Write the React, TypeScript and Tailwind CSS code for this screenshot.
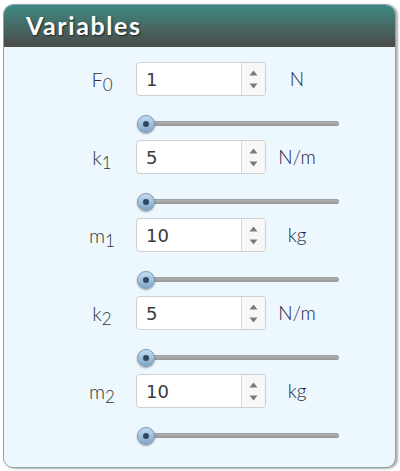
import React, { useState } from 'react';

interface Variable {
  id: string;
  sym: string;
  sub: string;
  value: string;
  unit: string;
}

const VARS: Variable[] = [
  { id: 'F0', sym: 'F', sub: '0', value: '1', unit: 'N' },
  { id: 'k1', sym: 'k', sub: '1', value: '5', unit: 'N/m' },
  { id: 'm1', sym: 'm', sub: '1', value: '10', unit: 'kg' },
  { id: 'k2', sym: 'k', sub: '2', value: '5', unit: 'N/m' },
  { id: 'm2', sym: 'm', sub: '2', value: '10', unit: 'kg' },
];

const Spinner = () => (
  <div className="flex flex-col w-[24px] border-l border-[#d6d6d6] bg-[#f7f7f7] rounded-r-[4px]">
    <div className="flex-1 flex items-center justify-center pt-[3px]">
      <svg width="9" height="6" viewBox="0 0 9 6"><path d="M4.5 0.5 L8.5 5.5 L0.5 5.5 Z" fill="#7a7a7a" /></svg>
    </div>
    <div className="flex-1 flex items-center justify-center pb-[3px]">
      <svg width="9" height="6" viewBox="0 0 9 6"><path d="M0.5 0.5 L8.5 0.5 L4.5 5.5 Z" fill="#7a7a7a" /></svg>
    </div>
  </div>
);

const Slider = () => (
  <div className="relative ml-[132px] mt-[19px] mb-[7px] h-[18px] w-[203px]">
    <div className="absolute left-[4px] right-0 top-[6px] h-[5px] rounded-full bg-gradient-to-b from-[#bdbdbd] to-[#949494] shadow-[inset_0_1px_1px_rgba(0,0,0,0.15)]" />
    <div className="absolute left-[1px] top-0 w-[18px] h-[18px] rounded-full bg-gradient-to-b from-[#c6dcf0] to-[#7fa6c8] border border-[#7b9ab6] shadow-[0_1px_2px_rgba(0,0,0,0.35)] flex items-center justify-center">
      <div className="w-[6px] h-[6px] rounded-full bg-[#2c4763]" />
    </div>
  </div>
);

const Row = ({ v }: { v: Variable }) => {
  const [val, setVal] = useState(v.value);
  return (
    <div>
      <div className="flex items-center pl-[68px]">
        <div className="w-[60px] text-center text-[20px] text-[#333] font-light font-['Lato',sans-serif]">
          {v.sym}
          <span className="text-[17px] relative top-[4px]">{v.sub}</span>
        </div>
        <div className="ml-[4px] flex w-[130px] h-[34px] bg-white border border-[#cfcfcf] rounded-[4px]">
          <input
            value={val}
            onChange={e => setVal(e.target.value)}
            className="flex-1 min-w-0 pl-[9px] text-[18px] text-[#3a3a3a] font-['DejaVu_Sans',sans-serif] outline-none bg-transparent rounded-l-[4px]"
          />
          <Spinner />
        </div>
        <div className="w-[62px] text-center text-[19px] text-[#1c1c3a] font-light font-['Lato',sans-serif]">{v.unit}</div>
      </div>
      <Slider />
    </div>
  );
}

export default function App() {
  return (
    <div className="w-[400px] h-[471px] bg-white pt-[4px] pl-[3px]">
      <div className="w-[393px] h-[464px] rounded-[10px] border border-[#8fa3a3] bg-[#edf7fe] shadow-[2px_1px_2px_rgba(0,0,0,0.3)] overflow-hidden">
        <div className="h-[42px] bg-gradient-to-b from-[#3a8a83] to-[#484b4a] flex items-center pl-[22px] border-b border-[#4a4f4e]">
          <h2 className="text-white text-[25px] font-bold tracking-[1.6px] font-['Lato',sans-serif] [text-shadow:1px_1px_2px_rgba(0,0,0,0.6)]">Variables</h2>
        </div>
        <div className="pt-[15px]">
          {VARS.map(v => <Row key={v.id} v={v} />)}
        </div>
      </div>
    </div>
  );
}
